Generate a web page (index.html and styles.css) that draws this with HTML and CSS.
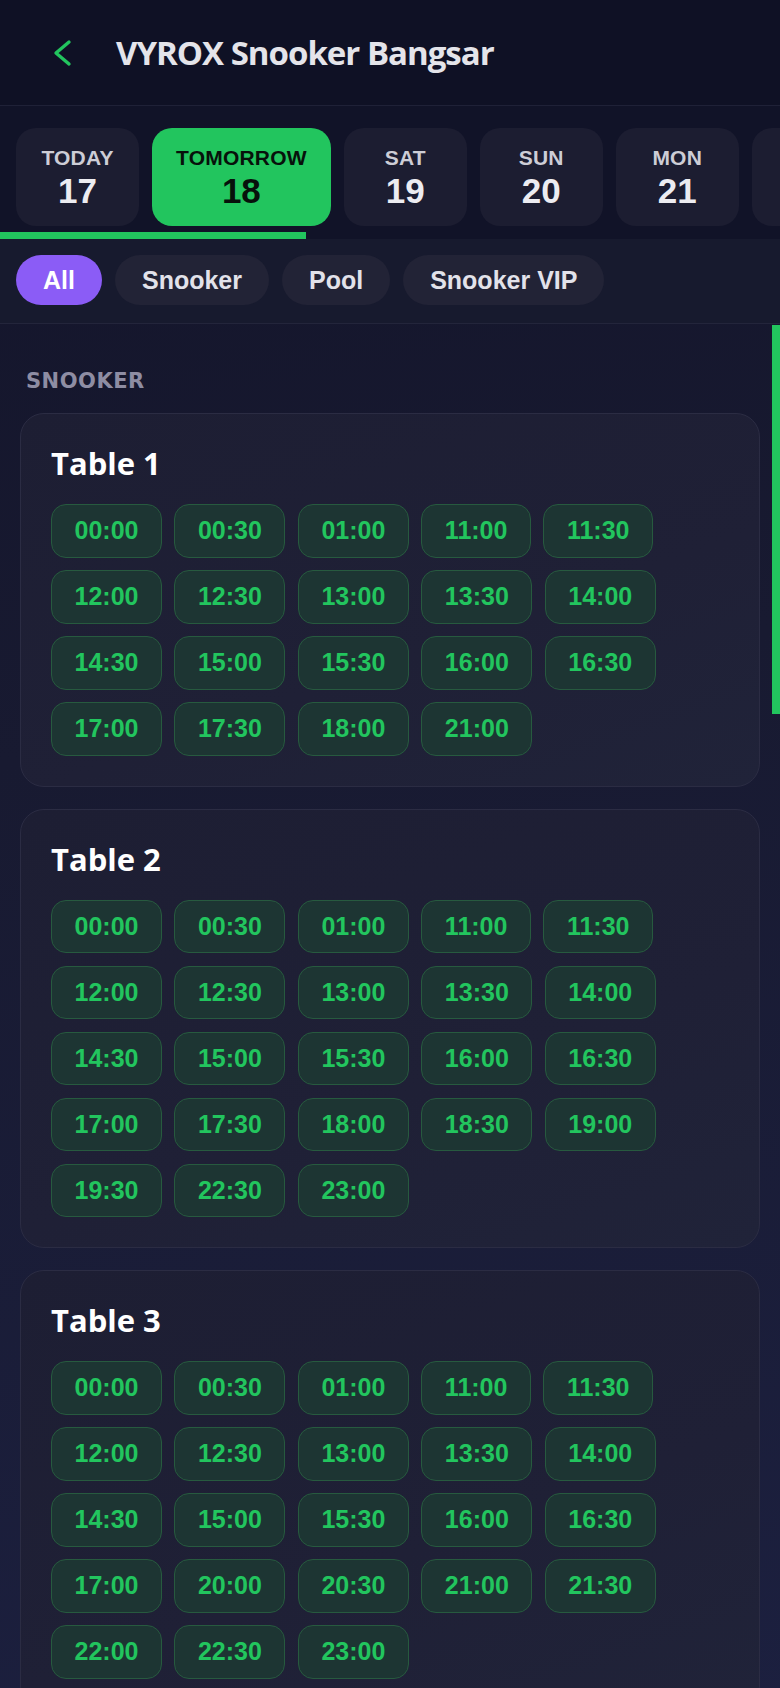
FILE: index.html
```html
<!DOCTYPE html>
<html lang="en">
<head>
<meta charset="utf-8">
<title>VYROX Snooker Bangsar</title>
<link rel="stylesheet" href="styles.css">
</head>
<body>
<div class="app">
  <header class="topbar">
    <button class="back" aria-label="Back">
      <svg width="20" height="28" viewBox="0 0 20 28"><polyline points="16,3 3,14 16,25" fill="none" stroke="#22c55e" stroke-width="3.4" stroke-linecap="round" stroke-linejoin="round"/></svg>
    </button>
    <h1 class="title">VYROX Snooker Bangsar</h1>
  </header>

  <section class="dates">
    <div class="date-row">
      <div class="date"><span class="dlabel">TODAY</span><span class="dnum">17</span></div>
      <div class="date active"><span class="dlabel">TOMORROW</span><span class="dnum">18</span></div>
      <div class="date"><span class="dlabel">SAT</span><span class="dnum">19</span></div>
      <div class="date"><span class="dlabel">SUN</span><span class="dnum">20</span></div>
      <div class="date"><span class="dlabel">MON</span><span class="dnum">21</span></div>
      <div class="date"><span class="dlabel">TUE</span><span class="dnum">22</span></div>
    </div>
    <div class="date-thumb"></div>
  </section>

  <nav class="filters">
    <span class="chip on">All</span>
    <span class="chip">Snooker</span>
    <span class="chip">Pool</span>
    <span class="chip">Snooker VIP</span>
  </nav>

  <main class="content">
    <h2 class="group">SNOOKER</h2>

    <div class="tcard">
      <h3 class="tname">Table 1</h3>
      <div class="slots">
        <span class="slot">00:00</span><span class="slot">00:30</span><span class="slot">01:00</span><span class="slot">11:00</span><span class="slot">11:30</span>
        <span class="slot">12:00</span><span class="slot">12:30</span><span class="slot">13:00</span><span class="slot">13:30</span><span class="slot">14:00</span>
        <span class="slot">14:30</span><span class="slot">15:00</span><span class="slot">15:30</span><span class="slot">16:00</span><span class="slot">16:30</span>
        <span class="slot">17:00</span><span class="slot">17:30</span><span class="slot">18:00</span><span class="slot">21:00</span>
      </div>
    </div>

    <div class="tcard">
      <h3 class="tname">Table 2</h3>
      <div class="slots">
        <span class="slot">00:00</span><span class="slot">00:30</span><span class="slot">01:00</span><span class="slot">11:00</span><span class="slot">11:30</span>
        <span class="slot">12:00</span><span class="slot">12:30</span><span class="slot">13:00</span><span class="slot">13:30</span><span class="slot">14:00</span>
        <span class="slot">14:30</span><span class="slot">15:00</span><span class="slot">15:30</span><span class="slot">16:00</span><span class="slot">16:30</span>
        <span class="slot">17:00</span><span class="slot">17:30</span><span class="slot">18:00</span><span class="slot">18:30</span><span class="slot">19:00</span>
        <span class="slot">19:30</span><span class="slot">22:30</span><span class="slot">23:00</span>
      </div>
    </div>

    <div class="tcard">
      <h3 class="tname">Table 3</h3>
      <div class="slots">
        <span class="slot">00:00</span><span class="slot">00:30</span><span class="slot">01:00</span><span class="slot">11:00</span><span class="slot">11:30</span>
        <span class="slot">12:00</span><span class="slot">12:30</span><span class="slot">13:00</span><span class="slot">13:30</span><span class="slot">14:00</span>
        <span class="slot">14:30</span><span class="slot">15:00</span><span class="slot">15:30</span><span class="slot">16:00</span><span class="slot">16:30</span>
        <span class="slot">17:00</span><span class="slot">20:00</span><span class="slot">20:30</span><span class="slot">21:00</span><span class="slot">21:30</span>
        <span class="slot">22:00</span><span class="slot">22:30</span><span class="slot">23:00</span>
      </div>
    </div>
  </main>

  <div class="vscroll"></div>
</div>
</body>
</html>
```

FILE: styles.css
```css
* { box-sizing: border-box; }

html, body {
  margin: 0;
  padding: 0;
}

body {
  background: #15162b;
  font-family: "Liberation Sans", Arial, sans-serif;
  color: #e6e6ec;
  overflow: hidden;
}

.app {
  position: relative;
  width: 780px;
  min-height: 1688px;
  background: linear-gradient(170deg, #13142a 0%, #181a31 40%, #1c2040 100%);
}

/* Header */
.topbar {
  height: 106px;
  display: flex;
  align-items: center;
  padding-left: 48px;
  background: #0f1125;
  border-bottom: 1px solid #1f2137;
}

.back {
  width: 30px;
  height: 40px;
  padding: 0;
  margin: 0 38px 0 0;
  border: 0;
  background: transparent;
  display: flex;
  align-items: center;
  justify-content: center;
}

.title {
  margin: 0;
  font-family: "Open Sans", "DejaVu Sans", sans-serif;
  font-weight: 700;
  font-size: 33px;
  letter-spacing: -1px;
  line-height: 40px;
  color: #e4e4ea;
}

/* Dates */
.dates {
  background: #111328;
  padding-top: 22px;
  overflow: hidden;
}

.date-row {
  display: flex;
  gap: 13px;
  padding: 0 16px;
  overflow: hidden;
}

.date {
  flex: 0 0 auto;
  min-width: 123px;
  height: 98px;
  padding: 0 24px;
  border-radius: 20px;
  background: #1c1d31;
  display: flex;
  flex-direction: column;
  align-items: center;
  justify-content: center;
  gap: 3px;
}

.dlabel {
  font-weight: 700;
  font-size: 21px;
  line-height: 24px;
  letter-spacing: 0.2px;
  color: #cdcdd6;
}

.dnum {
  font-weight: 700;
  font-size: 35px;
  line-height: 36px;
  color: #ececf1;
}

.date.active {
  background: #22c55e;
}

.date.active .dlabel,
.date.active .dnum {
  color: #07110b;
}

.date-thumb {
  width: 306px;
  height: 7px;
  margin-top: 6px;
  background: #22c55e;
}

/* Filters */
.filters {
  display: flex;
  gap: 13px;
  padding: 16px 16px 18px;
  background: #171a2e;
  border-bottom: 1px solid #23253b;
}

.chip {
  height: 50px;
  padding: 0 27px;
  border-radius: 25px;
  background: #222336;
  display: flex;
  align-items: center;
  font-weight: 700;
  font-size: 25px;
  color: #e2e2ea;
}

.chip.on {
  background: #8b5cf6;
  color: #ffffff;
}

/* Content */
.content {
  padding: 44px 20px 40px;
}

.group {
  margin: 0 0 19px;
  padding: 0 6px;
  font-family: "DejaVu Sans", sans-serif;
  font-weight: 700;
  font-size: 21px;
  line-height: 26px;
  letter-spacing: 0.5px;
  color: #8e8da3;
}

.tcard {
  padding: 31px 30px 30px;
  margin-bottom: 22px;
  border: 1px solid #2b2c43;
  border-radius: 24px;
  background: linear-gradient(160deg, #1d1e33 0%, #1f2036 60%, #202339 100%);
}

.tname {
  margin: 0 0 22px;
  font-family: "Open Sans", "DejaVu Sans", sans-serif;
  font-weight: 700;
  font-size: 31px;
  line-height: 37px;
  color: #ffffff;
}

.slots {
  display: flex;
  flex-wrap: wrap;
  gap: 12.5px;
}

.slot {
  height: 53.5px;
  padding: 0 22.5px;
  border: 1.5px solid #275a3f;
  border-radius: 15px;
  background: #1d3533;
  display: flex;
  align-items: center;
  justify-content: center;
  font-weight: 700;
  font-size: 25px;
  color: #22c55e;
}

/* page scrollbar thumb overlay */
.vscroll {
  position: absolute;
  right: 0;
  top: 325px;
  width: 8px;
  height: 389px;
  background: #22c55e;
}
```
